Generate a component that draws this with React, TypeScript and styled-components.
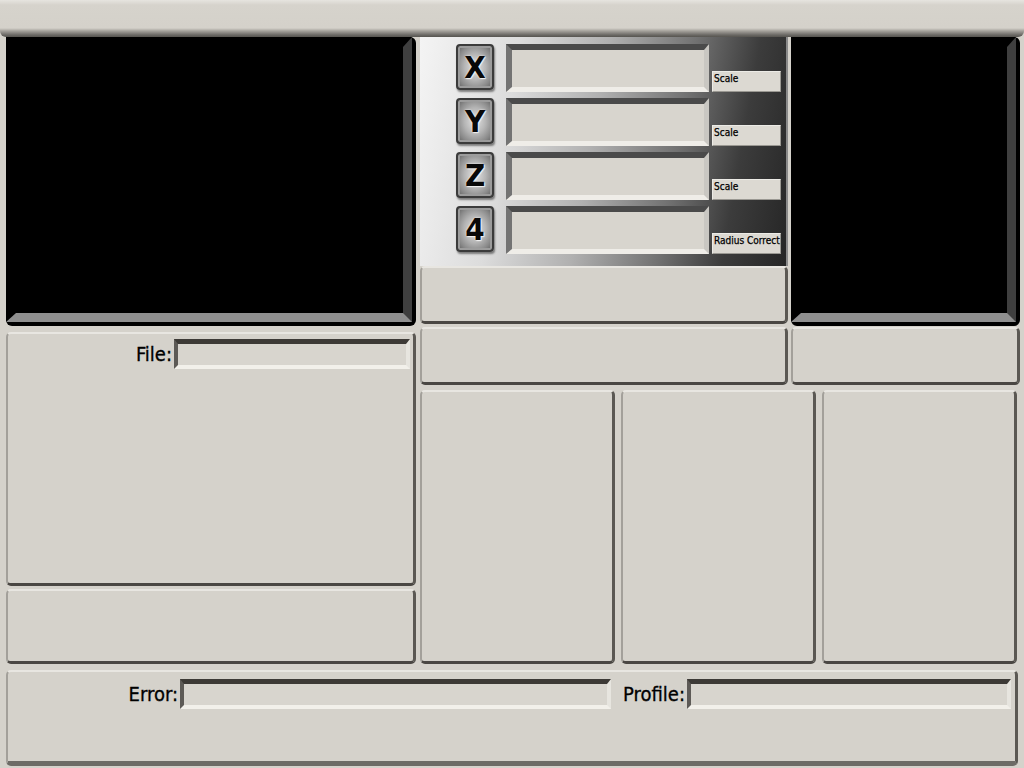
import React from 'react';
import styled, { createGlobalStyle, css } from 'styled-components';

const GlobalStyle = createGlobalStyle`
  html, body {
    margin: 0;
    padding: 0;
    background: #d5d2cb;
  }
  body {
    font-family: 'DejaVu Sans Condensed', 'DejaVu Sans', sans-serif;
    color: #000;
  }
`;

const raised = css`
  background: #d5d2cb;
  border-style: solid;
  border-width: 2px 3px 3px 2px;
  border-color: #e8e6e1 #5b5853 #4a4743 #a3a09a;
  border-radius: 5px;
  box-sizing: border-box;
`;

const Screen = styled.div`
  width: 1024px;
  height: 768px;
  background: #d5d2cb;
  overflow: hidden;
  display: flex;
  flex-direction: column;
`;

const TopBar = styled.div`
  height: 37px;
  box-sizing: border-box;
  background: linear-gradient(
    to bottom,
    #e6e4df 0px,
    #d6d3cc 5px,
    #d4d1ca 28px,
    #a4a19b 31px,
    #6a6864 35px,
    #57554f 37px
  );
  border-radius: 0 0 6px 6px;
`;

const Main = styled.div`
  display: flex;
  gap: 4px;
  padding: 0 4px 0 6px;
  height: 627px;
`;

const LeftColumn = styled.div`
  width: 410px;
  display: flex;
  flex-direction: column;
`;

const RightArea = styled.div`
  width: 600px;
  display: flex;
  flex-direction: column;
`;

const BlackScreen = styled.div<{ $h: number }>`
  height: ${(p) => p.$h}px;
  box-sizing: border-box;
  background: #000;
  border-radius: 6px;
  padding: 0 4px 4px 0;
`;

const Bevel = styled.div`
  height: 100%;
  box-sizing: border-box;
  border-style: solid;
  border-width: 10px 9px 9px 10px;
  border-color: #000 #3f3f3f #8f8f8f #000;
`;

const FilePanel = styled.div`
  ${raised};
  margin-top: 6px;
  height: 254px;
  padding: 5px 3px 0 0;
`;

const LabeledRow = styled.div<{ $cols: string }>`
  display: grid;
  grid-template-columns: ${(p) => p.$cols};
  align-items: center;
`;

const Label = styled.div`
  font-size: 20px;
  text-align: right;
  padding-right: 2px;
  color: #000;
  -webkit-text-stroke: 0.3px #000;
`;

const Sunken = styled.div`
  height: 30px;
  box-sizing: border-box;
  background: #d8d5ce;
  border-style: solid;
  border-width: 5px 4px 4px 4px;
  border-color: #3d3a36 #e7e5df #f2f0ea #5d5a56;
`;

const Panel = styled.div<{ $h?: number }>`
  ${raised};
  ${(p) => (p.$h ? `height: ${p.$h}px;` : '')}
`;

const LowerLeft = styled(Panel)`
  margin-top: 3px;
`;

const TopGrid = styled.div`
  display: grid;
  grid-template-columns: 368px 229px;
  grid-template-rows: 289px 58px;
  column-gap: 3px;
  row-gap: 1px;
`;

const DroBlock = styled.div`
  display: flex;
  flex-direction: column;
`;

const Dro = styled.div`
  height: 229px;
  box-sizing: border-box;
  padding: 7px 0 0 36px;
  background: linear-gradient(
    100deg,
    #f4f4f4 0%,
    #dcdcdc 25%,
    #b0b0b0 47%,
    #727272 68%,
    #3c3c3c 84%,
    #262626 100%
  );
  border-right: 2px solid #8a8a8a;
  display: flex;
  flex-direction: column;
  gap: 6px;
`;

const DroRow = styled.div`
  display: flex;
  align-items: flex-start;
  height: 48px;
`;

const AxisKey = styled.div`
  width: 38px;
  height: 46px;
  box-sizing: border-box;
  border: 2px solid #3b3b3b;
  border-radius: 4px;
  background: radial-gradient(
    ellipse at center,
    #e4e4e4 0%,
    #b4b4b4 45%,
    #8a8a8a 75%,
    #5e5e5e 100%
  );
  box-shadow: inset 0 0 0 2px #9c9c9c, 1px 2px 2px rgba(0, 0, 0, 0.45);
  display: flex;
  align-items: center;
  justify-content: center;
  font-family: 'DejaVu Sans Condensed', 'DejaVu Sans', sans-serif;
  font-weight: bold;
  font-size: 31px;
  color: #080808;
  text-shadow: 0 0 2px #fff, 1px 1px 1px #eee;
`;

const Readout = styled.div`
  width: 203px;
  height: 48px;
  margin-left: 12px;
  box-sizing: border-box;
  background: #d8d5ce;
  border-style: solid;
  border-width: 6px 5px 5px 6px;
  border-color: #4a4a4a #c9c7c2 #efede8 #737373;
`;

const ScaleButton = styled.div`
  align-self: flex-end;
  width: 69px;
  height: 21px;
  margin-left: 3px;
  box-sizing: border-box;
  background: #dcd9d2;
  border-top: 1px solid #ecebe6;
  border-left: 1px solid #ecebe6;
  border-bottom: 1px solid #9a9892;
  border-right: 1px solid #9a9892;
  font-size: 10px;
  -webkit-text-stroke: 0.25px #000;
  padding: 1px 0 0 1px;
  white-space: nowrap;
  color: #000;
`;

const BottomRow = styled.div`
  margin-top: 5px;
  display: grid;
  grid-template-columns: repeat(3, 195px);
  column-gap: 6px;
  height: 274px;
`;

const BottomBar = styled.div`
  ${raised};
  margin: 6px 6px 0 6px;
  height: 96px;
  padding-top: 7px;
  border-bottom: 5px solid #6d6b66;
`;

const axes = ['X', 'Y', 'Z', '4'];
const buttons = ['Scale', 'Scale', 'Scale', 'Radius Correct'];

const App: React.FC = () => {
  return (
    <Screen>
      <GlobalStyle />
      <TopBar />
      <Main>
        <LeftColumn>
          <BlackScreen $h={289}>
            <Bevel />
          </BlackScreen>
          <FilePanel>
            <LabeledRow $cols="1fr 236px">
              <Label>File:</Label>
              <Sunken />
            </LabeledRow>
          </FilePanel>
          <LowerLeft $h={75} />
        </LeftColumn>
        <RightArea>
          <TopGrid>
            <DroBlock>
              <Dro>
                {axes.map((axis, i) => (
                  <DroRow key={axis}>
                    <AxisKey>{axis}</AxisKey>
                    <Readout />
                    <ScaleButton>{buttons[i]}</ScaleButton>
                  </DroRow>
                ))}
              </Dro>
              <Panel $h={58} />
            </DroBlock>
            <BlackScreen $h={289}>
              <Bevel />
            </BlackScreen>
            <Panel $h={58} />
            <Panel $h={58} />
          </TopGrid>
          <BottomRow>
            <Panel />
            <Panel />
            <Panel />
          </BottomRow>
        </RightArea>
      </Main>
      <BottomBar>
        <LabeledRow $cols="172px 431px 76px 324px">
          <Label>Error:</Label>
          <Sunken />
          <Label>Profile:</Label>
          <Sunken />
        </LabeledRow>
      </BottomBar>
    </Screen>
  );
};

export default App;
